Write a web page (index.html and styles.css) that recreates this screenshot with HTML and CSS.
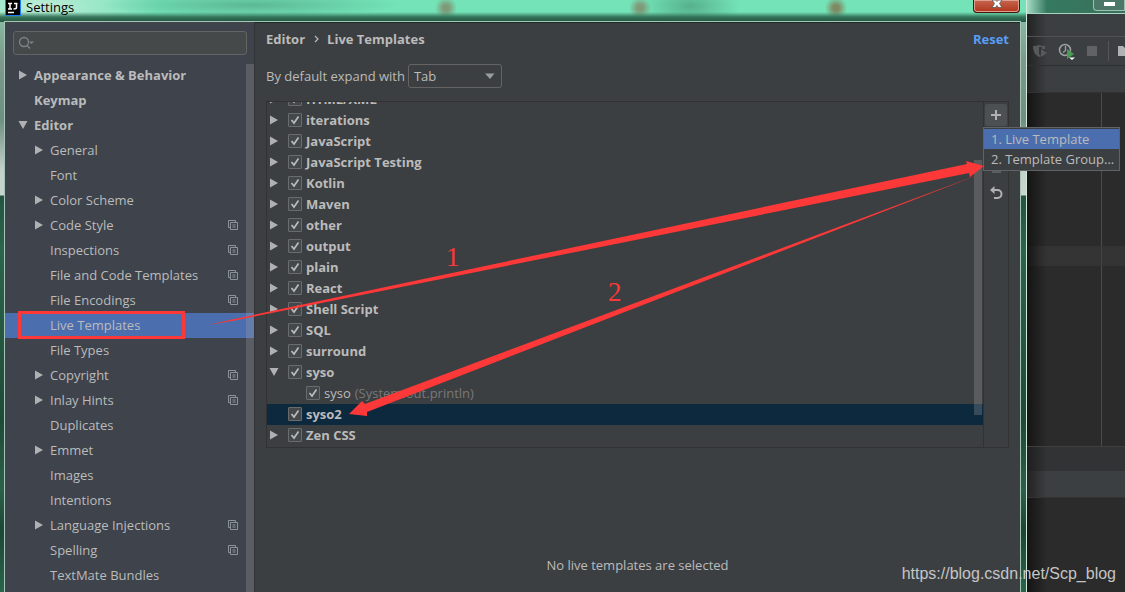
FILE: index.html
```html
<!DOCTYPE html>
<html lang="en">
<head>
  <meta charset="UTF-8" />
  <meta name="viewport" content="width=device-width, initial-scale=1" />
  <title>Settings</title>
  <link rel="stylesheet" href="styles.css">
</head>
<body>

  <svg class="defs" aria-hidden="true">
    <symbol id="right" viewBox="0 0 10 10"><path d="M1 0.5 L9 5 L1 9.5 Z" fill="#afb1b3"/></symbol>
    <symbol id="down" viewBox="0 0 10 10"><path d="M0.5 1 H9.5 L5 9 Z" fill="#afb1b3"/></symbol>
    <symbol id="copy" viewBox="0 0 10 10"><path d="M2.5 7.5 H0.5 V0.5 H7.5 V2.5 M2.5 2.5 H9.5 V9.5 H2.5 Z M4.5 5 H7.5 M4.5 7 H7.5" fill="none" stroke="#8c939b"/></symbol>
  </svg>

  <div class="desktop">
    <div class="window">
      <header class="titlebar">
        <svg class="logo" viewBox="0 0 16 16"><rect width="16" height="16" fill="#1a7df0"/><rect x="1" y="0" width="14" height="15" fill="#000"/><path d="M3 3.5 H7 M5 3.5 V9 M3 9 H7 M9 3.5 H12.5 M11.5 3.5 V7.5 Q11.5 9 8.5 9" fill="none" stroke="#fff" stroke-width="1.5"/><path d="M3 12.5 H9" stroke="#fff" stroke-width="1.5"/></svg>
        <span class="title">Settings</span>
        <button class="close" aria-label="Close"><svg viewBox="0 0 12 9"><path d="M1 0 H4.5 L6 1.5 L7.5 0 H11 L8.5 3.5 L11 7.5 H7.5 L6 5.5 L4.5 7.5 H1 L3.5 3.5 Z" fill="#fff" stroke="#555" stroke-width="0.8"/></svg></button>
      </header>

      <div class="content">
        <aside class="sidebar">
          <label class="search">
            <svg viewBox="0 0 17 14"><circle cx="6" cy="6" r="4.5" fill="none" stroke="#7d8388" stroke-width="1.3"/><path d="M9 9.5 L12 12.5" stroke="#7d8388" stroke-width="1.5"/><path d="M11 5.5 H16 L13.5 8 Z" fill="#7d8388"/></svg>
            <input type="text" aria-label="Search settings">
          </label>
          <div class="tree-wrap">
            <ul class="tree" id="tree"></ul>
            <div class="scrollbar"></div>
          </div>
        </aside>

        <main class="main">
          <div class="head">
            <h1>Editor</h1>
            <svg class="crumb" viewBox="0 0 5 8"><path d="M1 1 L4 4 L1 7" fill="none" stroke="#bbb" stroke-width="1.2"/></svg>
            <h1>Live Templates</h1>
            <a class="reset" href="#">Reset</a>
          </div>

          <div class="expand">
            <label for="key">By default expand with</label>
            <div class="combo">
              <select id="key"><option>Tab</option><option>Enter</option><option>Space</option></select>
              <svg viewBox="0 0 10 6"><path d="M0 0.5 H9.5 L5 6 Z" fill="#9a9da0"/></svg>
            </div>
          </div>

          <div class="panel">
            <div class="list-wrap">
              <ul class="list" id="list"></ul>
              <div class="list-scroll"></div>
            </div>
            <div class="tools">
              <button class="tool add" aria-label="Add"><svg viewBox="0 0 16 16"><path d="M8 3 V13 M3 8 H13" stroke="#afb1b3" stroke-width="2"/></svg></button>
              <button class="tool" aria-label="Remove"><svg viewBox="0 0 16 16"><path d="M3 8 H13" stroke="#606366" stroke-width="2"/></svg></button>
              <button class="tool" aria-label="Duplicate"><svg viewBox="0 0 16 16"><path d="M4 6 H13 V14 H4 Z" fill="#5b5e60"/></svg></button>
              <button class="tool" aria-label="Restore defaults"><svg viewBox="0 0 16 16"><path d="M4 5 H9.5 A4 4 0 0 1 9.5 13 H6" fill="none" stroke="#afb1b3" stroke-width="2"/><path d="M6.5 1 V9 L2 5 Z" fill="#afb1b3"/></svg></button>
              <div class="menu" role="menu">
                <button class="menu-item active" role="menuitem">1. Live Template</button>
                <button class="menu-item" role="menuitem">2. Template Group...</button>
              </div>
            </div>
          </div>

          <p class="empty">No live templates are selected</p>
        </main>
      </div>
    </div>

    <div class="ide">
      <div class="ide-title"><button class="minimize" aria-label="Minimize"></button></div>
      <div class="ide-menu"></div>
      <div class="ide-toolbar">
        <svg viewBox="0 0 98 28">
          <path d="M6 9 Q10 9 12 8 Q14 9 18 9 V12 H15 V10 H12 V17 L14 19 L12 20 Q6 17 6 9 Z" fill="#58595b"/><path d="M14 12 L20 16 L14 20 Z" fill="#58595b"/>
          <circle cx="38" cy="13" r="5.5" fill="none" stroke="#9fa2a4" stroke-width="1.5"/><path d="M38.5 9 V13.5 L36 15.5" fill="none" stroke="#9fa2a4" stroke-width="1.3"/>
          <path d="M40 12 L47 17 L40 22 Z" fill="#499c54"/><path d="M42 20.5 H48 L45 23 Z" fill="#fff"/>
          <rect x="60" y="9" width="10" height="10" fill="#616263"/>
          <path d="M81.5 4 V24" stroke="#555"/><path d="M91 9 H96 L98 11 V19 H91 Z" fill="#afb1b3"/>
        </svg>
      </div>
      <div class="ide-tabs"></div>
      <div class="ide-editor"><div class="caret-row"></div></div>
      <div class="ide-status"></div>
      <div class="ide-bar"></div>
      <div class="ide-console"></div>
    </div>
  </div>

  <svg class="marks" width="1125" height="592" viewBox="0 0 1125 592">
    <rect x="19.5" y="312.5" width="164" height="25" fill="none" stroke="#fd3838" stroke-width="3"/>
    <path d="M208 325 L232 319.5 L967 164 L966 161 L984 166 L970 177 L969 173 L232 321 Z" fill="#fd3838"/>
    <path d="M983 173 L365 404 L362 401 L349 414 L367 416 L367 412 Z" fill="#fd3838"/>
    <text x="446" y="266">1</text>
    <text x="608" y="301">2</text>
  </svg>
  <div class="watermark">https://blog.csdn.net/Scp_blog</div>

  <script src="script.js"></script>
</body>
</html>
```
FILE: styles.css
```css
* {
  box-sizing: border-box;
}
body {
  margin: 0;
  position: relative;
  overflow: hidden;
  font-family: 'Open Sans', 'Noto Sans', sans-serif;
  font-size: 13px;
  color: #bbbbbb;
}
ul {
  list-style: none;
  margin: 0;
  padding: 0;
}
button, input, select {
  font: inherit;
  color: inherit;
}
.defs {
  display: none;
}
.desktop {
  display: flex;
  height: 100vh;
}

/* settings window */
.window {
  flex: 1;
  display: flex;
  flex-direction: column;
  border-right: 1px solid #d5e8dd;
  background: linear-gradient(#88b9a2 20px, #7d9a8c 60px, #6f8f80 120px, #c4d2ca 170px, #c9d6cf 195px, #245440 196px, #2c644c 250px, #1f4a37 420px, #2c6049 490px, #1d4635 530px, #2a644b);
}
.titlebar {
  display: flex;
  align-items: flex-start;
  height: 22px;
  padding: 0 6px 0 5px;
  background:
    linear-gradient(transparent 12px, rgba(45, 105, 80, 0.9) 17px, #23543f),
    radial-gradient(circle at 446px 8px, #7f9a78 3px, transparent 11px),
    radial-gradient(circle at 640px 8px, #7f9a78 3px, transparent 11px),
    radial-gradient(circle at 836px 8px, #7f8a64 3px, transparent 11px),
    radial-gradient(ellipse 150px 12px at 250px 5px, #5cb895, transparent),
    radial-gradient(ellipse 50px 22px at 690px 6px, #56b18c, transparent),
    radial-gradient(ellipse 120px 30px at 40px 6px, #c0ecd8, transparent),
    #74e3b8;
}
.logo {
  width: 16px;
  height: 16px;
}
.title {
  margin-left: 5px;
  line-height: 15px;
  color: #000;
}
.close {
  display: flex;
  justify-content: center;
  width: 47px;
  height: 13px;
  margin-left: auto;
  padding: 0;
  border: 1px solid #451510;
  border-top: 0;
  border-radius: 0 0 4px 4px;
  background: linear-gradient(#c7664e, #b0351c);
  box-shadow: inset 0 0 0 1px #e0a090;
}
.close svg {
  width: 12px;
  height: 9px;
}
.content {
  flex: 1;
  display: flex;
  min-height: 0;
  margin: -1px 5px 0 4px;
  border: 1px solid #a5c5b5;
  border-bottom: 0;
  background: #3c3f41;
  box-shadow: inset 0 1px #1d2d26;
}

/* sidebar */
.sidebar {
  display: flex;
  flex-direction: column;
  width: 250px;
  padding-top: 9px;
  background: #3e434c;
  border-right: 1px solid #323437;
}
.search {
  display: flex;
  align-items: center;
  height: 24px;
  margin: 0 7px 8px 8px;
  padding: 0 4px;
  border: 1px solid #646464;
  border-radius: 3px;
  background: #45494a;
}
.search svg {
  width: 17px;
  height: 14px;
}
.search input {
  flex: 1;
  min-width: 0;
  border: 0;
  outline: 0;
  background: none;
}
.tree-wrap {
  position: relative;
  flex: 1;
  min-height: 0;
  overflow: hidden;
}
.tree-row {
  display: flex;
  align-items: center;
  height: 25px;
  padding: 0 16px 2px 13px;
}
.tree-row.child {
  padding-left: 29px;
}
.tree-row.top, .list-row.group {
  font-weight: bold;
}
.tree-row.selected {
  background: #4b6eaf;
}
.arrow {
  flex: none;
  width: 10px;
  height: 10px;
  margin-right: 6px;
}
.tree-row .copy {
  width: 10px;
  height: 10px;
  margin-left: auto;
}
.scrollbar {
  position: absolute;
  top: 1px;
  bottom: 0;
  right: 0;
  width: 8px;
  background: rgba(166, 166, 166, 0.28);
}

/* right side */
.main {
  flex: 1;
  display: flex;
  flex-direction: column;
  padding: 8px 11px 0 11px;
}
.head {
  display: flex;
  align-items: center;
  height: 18px;
}
h1 {
  margin: 0;
  font-size: 13px;
}
.crumb {
  width: 5px;
  height: 8px;
  margin: 0 8px 0 9px;
}
.reset {
  margin-left: auto;
  font-weight: bold;
  color: #589df6;
  text-decoration: none;
}
.expand {
  display: flex;
  align-items: center;
  gap: 3px;
  margin: 16px 0 13px;
}
.combo {
  display: flex;
  align-items: center;
  width: 94px;
  height: 24px;
  border: 1px solid #646464;
  border-radius: 3px;
}
.combo select {
  flex: 1;
  appearance: none;
  padding: 0 5px;
  border: 0;
  background: none;
}
.combo svg {
  width: 10px;
  height: 6px;
  margin-right: 6px;
}
.panel {
  display: flex;
  height: 347px;
  border: 1px solid #323232;
}
.list-wrap {
  position: relative;
  flex: 1;
  display: flex;
  flex-direction: column;
  justify-content: flex-end;
  padding-bottom: 1px;
  overflow: hidden;
}
.list-row {
  display: flex;
  align-items: center;
  height: 21px;
  padding: 0 0 2px 2px;
}
.list-row.leaf {
  padding-left: 20px;
}
.list-row.selected {
  background: #0d293e;
}
.list-row .arrow {
  margin-right: 9px;
}
.list-row label {
  display: flex;
  align-items: center;
}
.list-row input {
  appearance: none;
  width: 14px;
  height: 14px;
  margin: 0 4px 0 0;
  border: 1px solid #6b6b6b;
  border-radius: 1px;
  background: #43494a url("data:image/svg+xml,%3Csvg xmlns='http://www.w3.org/2000/svg' viewBox='0 0 12 12'%3E%3Cpath d='M2.5 6 L5 9 L9.5 2.5' fill='none' stroke='%23bbb' stroke-width='1.7'/%3E%3C/svg%3E") center / 12px 12px no-repeat;
}
.hint {
  margin-left: 4px;
  color: #787878;
}
.list-scroll {
  position: absolute;
  top: 58px;
  right: 1px;
  bottom: 32px;
  width: 8px;
  background: rgba(166, 166, 166, 0.28);
}
.tools {
  position: relative;
  display: flex;
  flex-direction: column;
  align-items: center;
  gap: 4px;
  width: 25px;
  padding-top: 2px;
  border-left: 1px solid #323232;
}
.tool {
  width: 22px;
  height: 22px;
  padding: 3px;
  border: 0;
  border-radius: 2px;
  background: none;
}
.tool.add {
  background: #4c5052;
}
.tool svg {
  display: block;
  width: 16px;
  height: 16px;
}
.menu {
  position: absolute;
  z-index: 2;
  top: 25px;
  left: -1px;
  width: 137px;
  padding: 1px 0;
  border: 1px solid #616365;
  background: #3c3f41;
}
.menu-item {
  display: block;
  width: 100%;
  height: 20px;
  padding: 0 7px;
  border: 0;
  background: none;
  line-height: 20px;
  text-align: left;
  white-space: nowrap;
}
.menu-item.active {
  background: #4b6eaf;
}
.empty {
  margin: auto 0 18px;
  text-align: center;
}

/* IDE window behind */
.ide {
  display: flex;
  flex-direction: column;
  width: 98px;
  background: linear-gradient(90deg, #141414, #2b2b2b 20px);
}
.ide-title {
  height: 14px;
  border-bottom: 1px solid #a9d5c2;
  background: linear-gradient(90deg, #a5dcc4, #347a60 20px, #3c6f5b);
}
.minimize {
  display: block;
  width: 32px;
  height: 11px;
  margin-left: auto;
  border: 1px solid #9bc1b0;
  border-top: 0;
  border-radius: 0 0 0 4px;
  background: linear-gradient(#fff, #fff) center 2px / 11px 4px no-repeat, #4d7768;
}
.ide-menu {
  height: 22px;
  background: linear-gradient(90deg, #222, #3c3f41 20px);
}
.ide-toolbar {
  height: 30px;
  border-top: 1px solid #515151;
  border-bottom: 1px solid #2d2f30;
  background: linear-gradient(90deg, #222, #3c3f41 20px);
}
.ide-toolbar svg {
  display: block;
  width: 98px;
  height: 28px;
}
.ide-tabs {
  height: 27px;
  border-bottom: 1px solid #323232;
  background: linear-gradient(90deg, #222, #3c3f41 20px);
}
.ide-editor {
  flex: 1;
  padding-top: 153px;
  background: linear-gradient(#4b4b4b, #4b4b4b) 74px 0 / 1px 100% no-repeat;
}
.caret-row {
  height: 20px;
  background: linear-gradient(90deg, transparent, rgba(60, 60, 60, 0.5) 20px);
}
.ide-status {
  height: 25px;
  border-top: 1px solid #3e3e3e;
  background: linear-gradient(90deg, #1e1e1f, #313335 20px);
}
.ide-bar {
  height: 27px;
  border-bottom: 1px solid #333;
  background: linear-gradient(90deg, #222, #3c3f41 20px);
}
.ide-console {
  height: 94px;
}

/* red marks and watermark lie over everything */
.marks {
  position: absolute;
  z-index: 3;
  top: 0;
  left: 0;
  pointer-events: none;
}
.marks text {
  font: 27px 'Liberation Serif', serif;
  fill: #fd3838;
}
.watermark {
  position: absolute;
  z-index: 3;
  right: 9px;
  bottom: 9px;
  font: 16px 'Liberation Sans', sans-serif;
  color: #c4c5c5;
}
```
FILE: script.js
```js
// [label, arrow, copy icon, extra class]
const settings = [
  ["Appearance & Behavior", "right", false, "top"],
  ["Keymap", "", false, "top"],
  ["Editor", "down", false, "top"],
  ["General", "right", false, "child"],
  ["Font", "", false, "child"],
  ["Color Scheme", "right", false, "child"],
  ["Code Style", "right", true, "child"],
  ["Inspections", "", true, "child"],
  ["File and Code Templates", "", true, "child"],
  ["File Encodings", "", true, "child"],
  ["Live Templates", "", false, "child selected"],
  ["File Types", "", false, "child"],
  ["Copyright", "right", true, "child"],
  ["Inlay Hints", "right", true, "child"],
  ["Duplicates", "", false, "child"],
  ["Emmet", "right", false, "child"],
  ["Images", "", false, "child"],
  ["Intentions", "", false, "child"],
  ["Language Injections", "right", true, "child"],
  ["Spelling", "", true, "child"],
  ["TextMate Bundles", "", false, "child"]
];

// [label, arrow, extra class, hint]
const templates = [
  ["HTML/XML", "right", "group"],
  ["iterations", "right", "group"],
  ["JavaScript", "right", "group"],
  ["JavaScript Testing", "right", "group"],
  ["Kotlin", "right", "group"],
  ["Maven", "right", "group"],
  ["other", "right", "group"],
  ["output", "right", "group"],
  ["plain", "right", "group"],
  ["React", "right", "group"],
  ["Shell Script", "right", "group"],
  ["SQL", "right", "group"],
  ["surround", "right", "group"],
  ["syso", "down", "group"],
  ["syso", "", "leaf", "(System.out.println)"],
  ["syso2", "", "group selected"],
  ["Zen CSS", "right", "group"]
];

const arrow = name => `<svg class="arrow">${name ? `<use href="#${name}"/>` : ""}</svg>`;

document.getElementById("tree").innerHTML = settings.map(([label, dir, copy, cls]) => `
  <li class="tree-row ${cls}">${arrow(dir)}<span>${label.replace("&", "&amp;")}</span>
  ${copy ? '<svg class="copy"><use href="#copy"/></svg>' : ""}</li>`).join("");

document.getElementById("list").innerHTML = templates.map(([label, dir, cls, hint]) => `
  <li class="list-row ${cls}">${arrow(dir)}<label><input type="checkbox" checked>${label}</label>
  ${hint ? `<span class="hint">${hint}</span>` : ""}</li>`).join("");
```
